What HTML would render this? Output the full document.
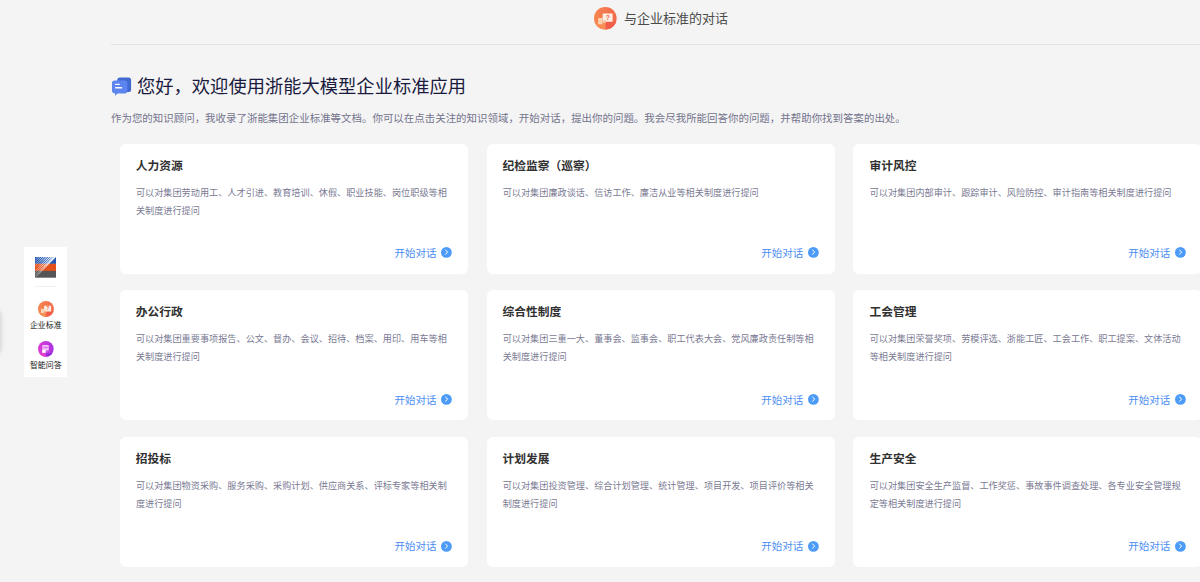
<!DOCTYPE html>
<html lang="zh-CN">
<head>
<meta charset="utf-8">
<title>与企业标准的对话</title>
<style>
*{box-sizing:border-box;margin:0;padding:0}
html,body{width:1200px;height:582px;overflow:hidden;background:#f4f4f4}
body{position:relative;font-family:"Liberation Sans","Noto Sans CJK SC",sans-serif;-webkit-text-size-adjust:none}
.abs{position:absolute;white-space:nowrap}
svg{overflow:visible}
.hdr-ico{left:594.4px;top:6.6px;width:22.6px;height:22.6px}
.hdr-txt{left:624px;top:8.5px;height:20px;line-height:20px;font-size:13px;color:#4a4a4a}
.hdr-line{left:111px;top:44px;width:1100px;height:1px;background:#e3e3e3}
.h1-ico{left:112px;top:76.5px;width:19.2px;height:18.8px}
.h1{left:137px;top:72.7px;height:28px;line-height:28px;font-size:18.3px;color:#1b1b3f}
.sub{left:111px;top:110.1px;height:18px;line-height:18px;font-size:10.45px;color:#73738c;font-weight:400;letter-spacing:.02px}
.card{position:absolute;width:348.4px;height:130.2px;background:#fff;border-radius:6px}
.card h3{position:absolute;left:15.8px;top:13.3px;height:18px;line-height:18px;font-size:11.75px;font-weight:700;color:#303030;white-space:nowrap}
.card p{position:absolute;left:15.9px;top:40.2px;width:316px;font-size:9.15px;line-height:18.3px;color:#7a7a93;font-weight:400;letter-spacing:.02px}
.card .go{position:absolute;left:274.5px;top:100px;height:18px;line-height:18px;font-size:10.5px;color:#4a8df3;white-space:nowrap}
.card svg{position:absolute;left:320.8px;top:103.7px;width:10.8px;height:10.8px}
.c1{left:120px}.c2{left:486.8px}.c3{left:853.3px}.c3>*{margin-left:.5px}
.r1{top:143.7px}.r2{top:290px;height:130.2px}.r3{top:437px;height:130px}.r3>h3,.r3>p{margin-top:-.6px}.r2>.go{margin-top:.6px}.r2>svg{margin-top:0}.r3>.go{margin-top:0}.r3>svg{margin-top:.2px}
.side{left:24px;top:246.6px;width:43.2px;height:130.4px;background:#fff}
.side-line{left:35px;top:286px;width:21px;height:1px;background:#f0f0f0}
.lbl{font-size:7.9px;line-height:10px;height:10px;color:#111;width:43.5px;text-align:center;left:24px}
.edge{left:-10px;top:311px;width:10px;height:42px;border-radius:4px;background:#ddd;box-shadow:0 0 5px 1px rgba(0,0,0,.14)}
</style>
</head>
<body>
<svg class="abs hdr-ico" viewBox="0 0 24 24"><defs><linearGradient id="og" x1="0" y1="0" x2="1" y2="0"><stop offset="0" stop-color="#f6864f"/><stop offset="1" stop-color="#f3694b"/></linearGradient><clipPath id="cc"><circle cx="12" cy="12" r="12"/></clipPath><linearGradient id="pg" x1="0" y1="0" x2="1" y2="0"><stop offset="0" stop-color="#de3ad4"/><stop offset="1" stop-color="#aa33e2"/></linearGradient></defs><circle cx="12" cy="12" r="12" fill="url(#og)"/><g clip-path="url(#cc)"><rect x="0" y="16.6" width="12.4" height="8" fill="#f68e56"/><rect x="12.4" y="15.8" width="12" height="9" fill="#f25d4a"/></g><rect x="4.4" y="11.6" width="4.7" height="6.6" rx=".6" fill="#fbd3b2"/><rect x="9.2" y="7" width="10.6" height="8.7" rx=".5" fill="#fdeee3"/><rect x="9.2" y="14" width="3.2" height="3" fill="#f9c6a4"/><text x="14.6" y="14.1" font-family="Liberation Sans, sans-serif" font-size="7.2" font-weight="700" fill="#f0644c" text-anchor="middle">?</text></svg>
<div class="abs hdr-txt">与企业标准的对话</div>
<div class="abs hdr-line"></div>

<svg class="abs h1-ico" viewBox="0 0 19.2 18.8"><rect x="5.3" y="0.4" width="13.8" height="14.6" rx="2.6" fill="#4268d2"/><path d="M2.6 3.6h10.2a2.6 2.6 0 0 1 2.6 2.6v7.6a2.6 2.6 0 0 1-2.6 2.6H5.6l-2.6 2.3V16.3A2.6 2.6 0 0 1 0 13.8V6.2a2.6 2.6 0 0 1 2.6-2.6z" fill="#5c85ef"/><rect x="3" y="6.8" width="4.8" height="1.3" rx=".6" fill="#fff"/><rect x="3" y="10.1" width="7.2" height="1.3" rx=".6" fill="#fff"/></svg>
<div class="abs h1">您好，欢迎使用浙能大模型企业标准应用</div>
<div class="abs sub">作为您的知识顾问，我收录了浙能集团企业标准等文档。你可以在点击关注的知识领域，开始对话，提出你的问题。我会尽我所能回答你的问题，并帮助你找到答案的出处。</div>

<div class="card c1 r1"><h3>人力资源</h3><p>可以对集团劳动用工、人才引进、教育培训、休假、职业技能、岗位职级等相关制度进行提问</p><span class="go">开始对话</span><svg viewBox="0 0 12 12"><circle cx="6" cy="6" r="6" fill="#4d9bf8"/><path d="M5.1 3.3L7.3 5.7 5.1 8.1" fill="none" stroke="#fff" stroke-width="1.1" stroke-linecap="round" stroke-linejoin="round"/></svg></div>
<div class="card c2 r1"><h3>纪检监察（巡察）</h3><p>可以对集团廉政谈话、信访工作、廉洁从业等相关制度进行提问</p><span class="go">开始对话</span><svg viewBox="0 0 12 12"><circle cx="6" cy="6" r="6" fill="#4d9bf8"/><path d="M5.1 3.3L7.3 5.7 5.1 8.1" fill="none" stroke="#fff" stroke-width="1.1" stroke-linecap="round" stroke-linejoin="round"/></svg></div>
<div class="card c3 r1"><h3>审计风控</h3><p>可以对集团内部审计、跟踪审计、风险防控、审计指南等相关制度进行提问</p><span class="go">开始对话</span><svg viewBox="0 0 12 12"><circle cx="6" cy="6" r="6" fill="#4d9bf8"/><path d="M5.1 3.3L7.3 5.7 5.1 8.1" fill="none" stroke="#fff" stroke-width="1.1" stroke-linecap="round" stroke-linejoin="round"/></svg></div>

<div class="card c1 r2"><h3>办公行政</h3><p>可以对集团重要事项报告、公文、督办、会议、招待、档案、用印、用车等相关制度进行提问</p><span class="go">开始对话</span><svg viewBox="0 0 12 12"><circle cx="6" cy="6" r="6" fill="#4d9bf8"/><path d="M5.1 3.3L7.3 5.7 5.1 8.1" fill="none" stroke="#fff" stroke-width="1.1" stroke-linecap="round" stroke-linejoin="round"/></svg></div>
<div class="card c2 r2"><h3>综合性制度</h3><p>可以对集团三重一大、董事会、监事会、职工代表大会、党风廉政责任制等相关制度进行提问</p><span class="go">开始对话</span><svg viewBox="0 0 12 12"><circle cx="6" cy="6" r="6" fill="#4d9bf8"/><path d="M5.1 3.3L7.3 5.7 5.1 8.1" fill="none" stroke="#fff" stroke-width="1.1" stroke-linecap="round" stroke-linejoin="round"/></svg></div>
<div class="card c3 r2"><h3>工会管理</h3><p>可以对集团荣誉奖项、劳模评选、浙能工匠、工会工作、职工提案、文体活动等相关制度进行提问</p><span class="go">开始对话</span><svg viewBox="0 0 12 12"><circle cx="6" cy="6" r="6" fill="#4d9bf8"/><path d="M5.1 3.3L7.3 5.7 5.1 8.1" fill="none" stroke="#fff" stroke-width="1.1" stroke-linecap="round" stroke-linejoin="round"/></svg></div>

<div class="card c1 r3"><h3>招投标</h3><p>可以对集团物资采购、服务采购、采购计划、供应商关系、评标专家等相关制度进行提问</p><span class="go">开始对话</span><svg viewBox="0 0 12 12"><circle cx="6" cy="6" r="6" fill="#4d9bf8"/><path d="M5.1 3.3L7.3 5.7 5.1 8.1" fill="none" stroke="#fff" stroke-width="1.1" stroke-linecap="round" stroke-linejoin="round"/></svg></div>
<div class="card c2 r3"><h3>计划发展</h3><p>可以对集团投资管理、综合计划管理、统计管理、项目开发、项目评价等相关制度进行提问</p><span class="go">开始对话</span><svg viewBox="0 0 12 12"><circle cx="6" cy="6" r="6" fill="#4d9bf8"/><path d="M5.1 3.3L7.3 5.7 5.1 8.1" fill="none" stroke="#fff" stroke-width="1.1" stroke-linecap="round" stroke-linejoin="round"/></svg></div>
<div class="card c3 r3"><h3>生产安全</h3><p>可以对集团安全生产监督、工作奖惩、事故事件调查处理、各专业安全管理规定等相关制度进行提问</p><span class="go">开始对话</span><svg viewBox="0 0 12 12"><circle cx="6" cy="6" r="6" fill="#4d9bf8"/><path d="M5.1 3.3L7.3 5.7 5.1 8.1" fill="none" stroke="#fff" stroke-width="1.1" stroke-linecap="round" stroke-linejoin="round"/></svg></div>

<div class="abs edge"></div>
<div class="abs side"></div>
<svg class="abs" style="left:35px;top:257.1px;width:21px;height:20.7px" viewBox="0 0 21 20.7" preserveAspectRatio="none"><rect x="0" y="0" width="21" height="6.9" fill="#2458b2"/><rect x="0" y="6.8" width="21" height="7.2" fill="#e3511d"/><rect x="0" y="13.9" width="21" height="6.8" fill="#555557"/><g fill="#fff"><polygon points="0.00,20.70 0.00,20.51 19.20,0.00 21.00,0.00"/><polygon points="0.00,18.52 0.00,18.29 17.78,0.00 19.56,0.00"/><polygon points="0.00,16.22 0.00,16.00 15.55,0.00 17.13,0.00"/><polygon points="0.00,13.91 0.00,13.71 13.32,0.00 14.70,0.00"/><polygon points="0.00,11.61 0.00,11.42 11.08,0.00 12.28,0.00"/><polygon points="0.00,9.31 0.00,9.12 8.84,0.00 9.86,0.00"/><polygon points="0.00,7.01 0.00,6.83 6.59,0.00 7.45,0.00"/><polygon points="0.00,4.70 0.00,4.54 4.33,0.00 5.05,0.00"/><polygon points="0.00,2.40 0.00,2.25 2.07,0.00 2.65,0.00"/></g></svg>
<div class="abs side-line"></div>
<svg class="abs" style="left:38.1px;top:301.1px;width:15.9px;height:15.9px" viewBox="0 0 24 24"><circle cx="12" cy="12" r="12" fill="url(#og)"/><g clip-path="url(#cc)"><rect x="0" y="16.6" width="12.4" height="8" fill="#f68e56"/><rect x="12.4" y="15.8" width="12" height="9" fill="#f25d4a"/></g><rect x="4.4" y="11.6" width="4.7" height="6.6" rx=".6" fill="#fbd3b2"/><rect x="9.2" y="7" width="10.6" height="8.7" rx=".5" fill="#fdeee3"/><rect x="9.2" y="14" width="3.2" height="3" fill="#f9c6a4"/><text x="14.6" y="14.1" font-family="Liberation Sans, sans-serif" font-size="7.2" font-weight="700" fill="#f0644c" text-anchor="middle">?</text></svg>
<div class="abs lbl" style="top:320.7px">企业标准</div>
<svg class="abs" style="left:38.1px;top:340.8px;width:15.7px;height:15.7px" viewBox="0 0 24 24"><circle cx="12" cy="12" r="12" fill="url(#pg)"/><g clip-path="url(#cc)"><rect x="0" y="18.6" width="12.2" height="6" fill="#e23ed0"/><rect x="12.2" y="18.6" width="12" height="6" fill="#962ae0"/></g><path d="M7.4 6.2h8.2a.8.8 0 0 1 .8.8v7.4h-4v3.6H7.4a.8.8 0 0 1-.8-.8V7a.8.8 0 0 1 .8-.8z" fill="#f6c4fb"/><rect x="6.6" y="13.6" width="4.2" height="4.4" fill="#fff"/><rect x="8.2" y="8.6" width="6.6" height="2.6" fill="#d979ec"/><rect x="12.6" y="15" width="3.8" height="2.6" fill="#c45ae8"/></svg>
<div class="abs lbl" style="top:360.5px">智能问答</div>
</body>
</html>
